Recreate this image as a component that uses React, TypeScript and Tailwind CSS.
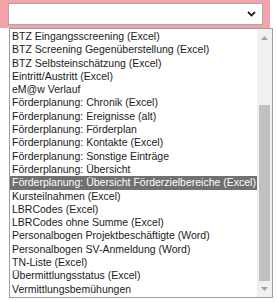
import React from "react";

const items = [
  "BTZ Eingangsscreening (Excel)",
  "BTZ Screening Gegenüberstellung (Excel)",
  "BTZ Selbsteinschätzung (Excel)",
  "Eintritt/Austritt (Excel)",
  "eM@w Verlauf",
  "Förderplanung: Chronik (Excel)",
  "Förderplanung: Ereignisse (alt)",
  "Förderplanung: Förderplan",
  "Förderplanung: Kontakte (Excel)",
  "Förderplanung: Sonstige Einträge",
  "Förderplanung: Übersicht",
  "Förderplanung: Übersicht Förderzielbereiche (Excel)",
  "Kursteilnahmen (Excel)",
  "LBRCodes (Excel)",
  "LBRCodes ohne Summe (Excel)",
  "Personalbogen Projektbeschäftigte (Word)",
  "Personalbogen SV-Anmeldung (Word)",
  "TN-Liste (Excel)",
  "Übermittlungsstatus (Excel)",
  "Vermittlungsbemühungen",
];

export default function App() {
  return (
    <div
      className="relative w-[277px] h-[302px] overflow-hidden bg-white"
      style={{ fontFamily: '"Liberation Sans", Arial, sans-serif' }}
    >
      <div className="w-[270px] h-[28px] bg-[#f4a3aa] pl-[8px] pt-[3px]">
        <div className="w-[255px] h-[22px] bg-white border border-[#a9a9a9] flex items-center justify-end pr-[6px]">
          <svg width="9" height="6" viewBox="0 0 9 6">
            <polyline points="1,1 4.5,4.5 8,1" fill="none" stroke="#222" strokeWidth="1.8" />
          </svg>
        </div>
      </div>
      <div className="absolute left-[9px] top-[28px] w-[264px] h-[270px] bg-white border border-[#a0a0a0] flex">
        <div className="flex-1 flex flex-col pt-[1px] text-[10.5px] leading-[13.3px] text-[#1a1a1a]">
          {items.map((t, i) => (
            <div
              key={t}
              className={
                i === 11
                  ? "bg-[#707070] text-white pl-[2px] whitespace-nowrap"
                  : "pl-[2px] whitespace-nowrap"
              }
            >
              {t}
            </div>
          ))}
        </div>
        <div className="w-[15px] h-full bg-[#f0f0f0] flex flex-col items-center">
          <div className="h-[17px] flex items-center justify-center">
            <svg width="7" height="4" viewBox="0 0 7 4">
              <polygon points="0,4 3.5,0 7,4" fill="#a3a3a3" />
            </svg>
          </div>
          <div className="w-[11px] mt-[59px] h-[176px] bg-[#c1c1c1]" />
          <div className="flex-1 flex items-center justify-center">
            <svg width="7" height="4" viewBox="0 0 7 4">
              <polygon points="0,0 7,0 3.5,4" fill="#a3a3a3" />
            </svg>
          </div>
        </div>
      </div>
    </div>
  );
}
